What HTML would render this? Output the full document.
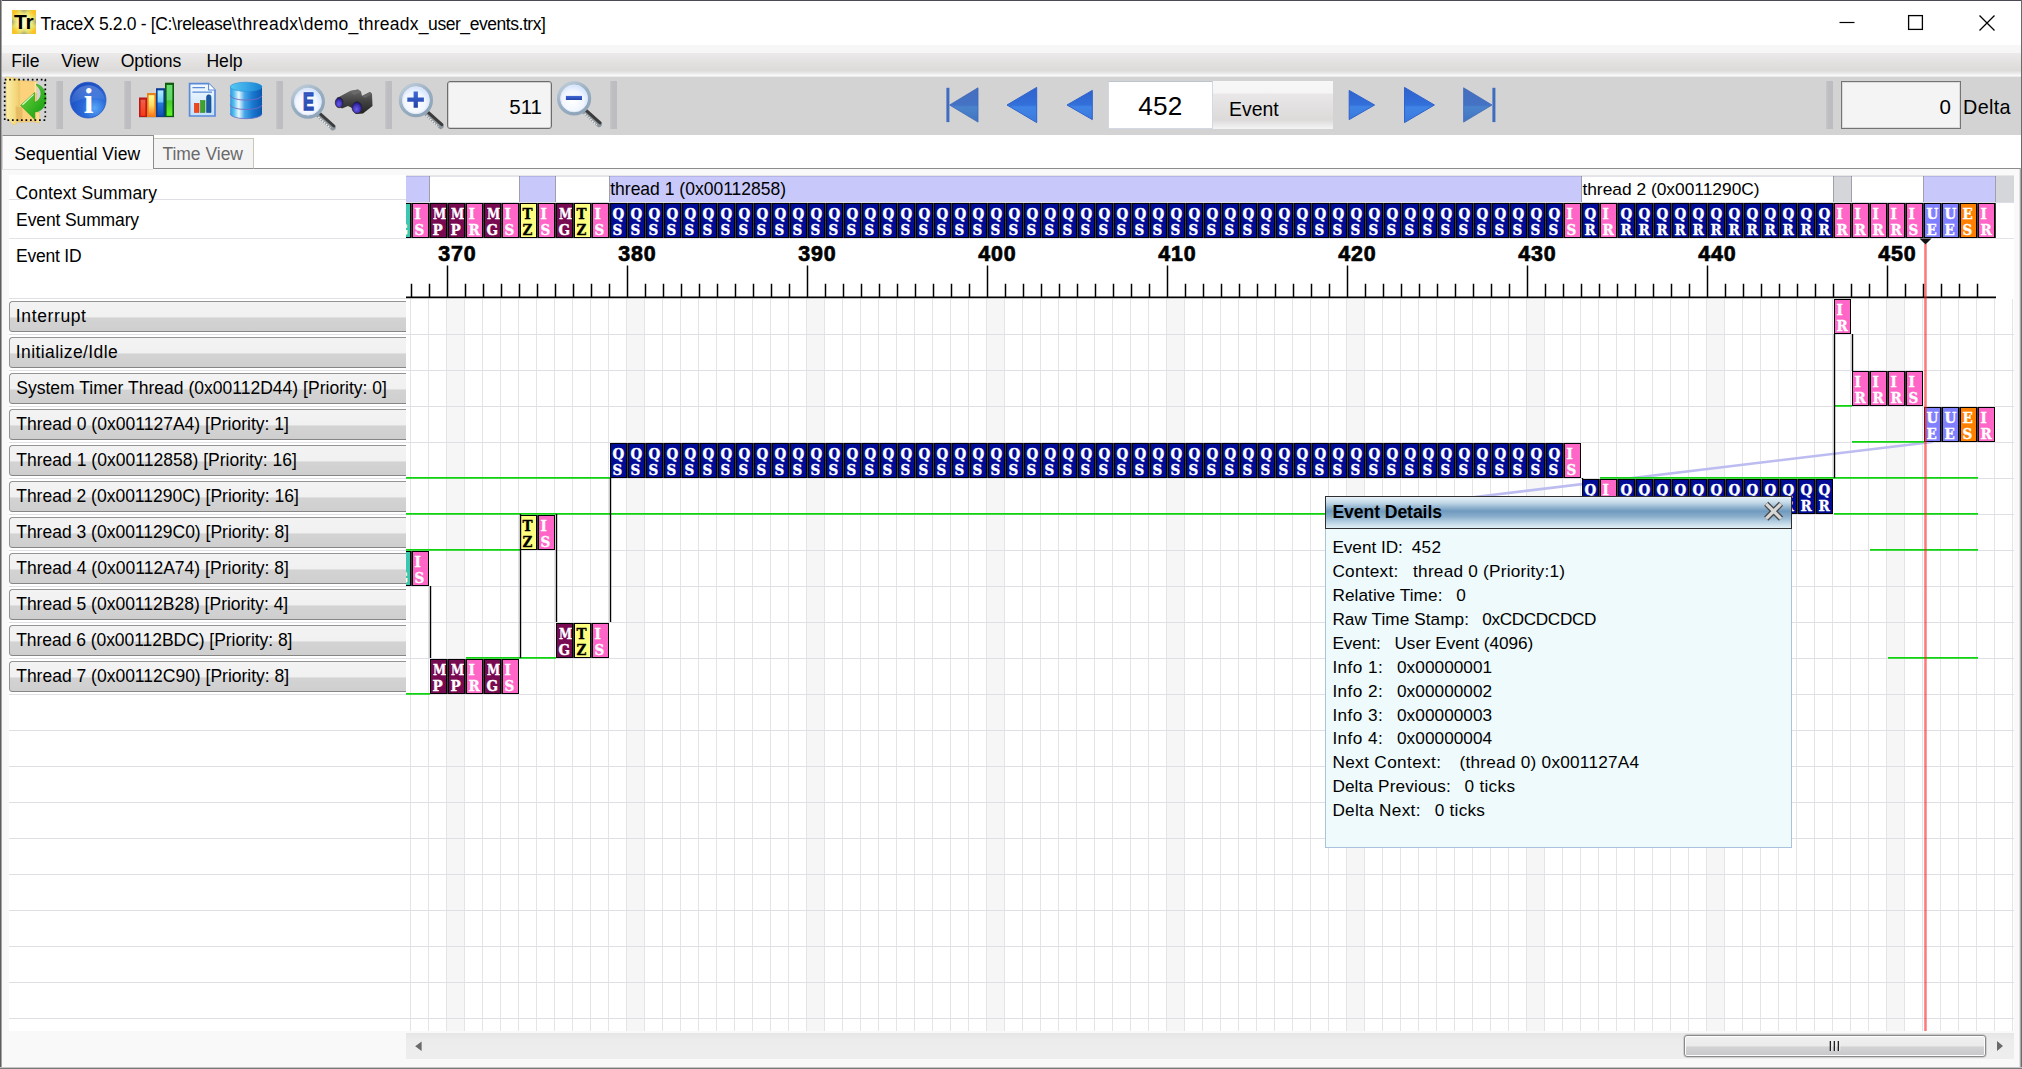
<!DOCTYPE html>
<html><head><meta charset="utf-8"><title>TraceX 5.2.0</title>
<style>
html,body{margin:0;padding:0}
body{width:2022px;height:1069px;position:relative;overflow:hidden;background:#f9f9f9;font-family:"Liberation Sans",sans-serif;color:#000}
.t{position:absolute;white-space:pre}
.b{position:absolute;box-sizing:border-box}
svg{position:absolute;overflow:visible}
.e{position:absolute;box-sizing:border-box;width:17px;height:35px;border:1px solid #000;color:#fff;font-family:"DejaVu Serif Condensed","DejaVu Serif",serif;font-weight:700;font-size:15px;line-height:16.1px;text-align:left;padding:1.6px 0 0 1.6px;overflow:hidden;white-space:pre;-webkit-text-stroke:.35px currentColor}
.e i{display:block;font-style:normal;transform-origin:0 0}
.e .w{transform:scaleX(.88)}
.p{background:#ff66c8}.m{background:#780a52}.q{background:#000c96}.y{background:#ffff80;color:#000}.g{background:#3cc8b0}.u{background:#8080ff}.o{background:#ff8000}
.rb{position:absolute;box-sizing:border-box;left:9px;width:397px;height:31px;border:1px solid #949494;border-bottom-color:#868686;border-right:none;border-radius:3.5px 0 0 3.5px;background:linear-gradient(#f3f3f3 0,#f1f1f1 50%,#d3d3d3 56%,#cfcfcf 100%)}
.sep{position:absolute;top:81px;width:7px;height:48px;background:linear-gradient(90deg,#c8c8cb 0,#bebec2 30%,#bdbdc1 100%)}
</style></head><body>
<div class="b" style="left:0px;top:0px;width:2022px;height:45px;background:#fff"></div>
<div class="b" style="left:12px;top:10px;width:24px;height:24px;background:radial-gradient(circle at 50% 50%,#ffffc4 0,#fdfbb0 30%,rgba(248,240,120,.75) 52%,rgba(240,230,110,0) 78%),conic-gradient(from 0deg at 50% 50%,#8a8a74 0deg,#d9cf5a 22deg,#ffc21e 45deg,#d9cf5a 68deg,#86866e 90deg,#d9cf5a 112deg,#ffc21e 135deg,#d9cf5a 158deg,#8a8a74 180deg,#d9cf5a 202deg,#ffc21e 225deg,#d9cf5a 248deg,#86866e 270deg,#d9cf5a 292deg,#ffc21e 315deg,#d9cf5a 338deg,#8a8a74 360deg)"></div>
<div class="t" style="left:13.90px;top:10px;font-size:21px;line-height:23px;font-weight:700;letter-spacing:-0.121px;">Tr</div>
<div class="t" style="left:40.60px;top:14px;font-size:17.5px;line-height:20px;"><span style="letter-spacing:-0.333px">TraceX 5.2.0 - </span><span style="letter-spacing:-0.320px">[C:\release</span><span style="letter-spacing:0.433px">\threadx</span><span style="letter-spacing:0.274px">\demo_threadx</span><span style="letter-spacing:-0.449px">_user_events.trx]</span></div>
<svg style="left:1830px;top:8px" width="180" height="30"><path d="M9.5 14.5H24.5" stroke="#000" stroke-width="1.2" fill="none"/><rect x="78.6" y="7.6" width="13.8" height="13.8" stroke="#000" stroke-width="1.3" fill="none"/><path d="M149.5 7.5L164.5 22.5M164.5 7.5L149.5 22.5" stroke="#000" stroke-width="1.3" fill="none"/></svg>
<div class="b" style="left:0px;top:45px;width:2022px;height:32px;background:linear-gradient(#f7f7f7 0,#f6f6f6 24%,#ebe9ea 26.5%,#e3e2e1 52%,#dcdbd9 80%,#e9e9e9 88%,#f9f9f9 95%,#e4e4e4 100%)"></div>
<div class="t" style="left:11.20px;top:51px;font-size:17.6px;line-height:20px;">File</div>
<div class="t" style="left:61.20px;top:51px;font-size:17.6px;line-height:20px;">View</div>
<div class="t" style="left:120.70px;top:51px;font-size:17.6px;line-height:20px;">Options</div>
<div class="t" style="left:206.40px;top:51px;font-size:17.6px;line-height:20px;">Help</div>
<div class="b" style="left:0px;top:77px;width:2022px;height:58px;background:#d3d3d3"></div>
<div class="sep" style="left:56px"></div>
<div class="sep" style="left:124px"></div>
<div class="sep" style="left:276px"></div>
<div class="sep" style="left:385px"></div>
<div class="sep" style="left:610px"></div>
<div class="sep" style="left:1826px"></div>
<svg style="left:0;top:0" width="2022" height="140"><defs>
<linearGradient id="gf1" x1="0" y1="0" x2="1" y2="0"><stop offset="0" stop-color="#fdf0a8"/><stop offset="1" stop-color="#f0d070"/></linearGradient>
<linearGradient id="gf2" x1="0" y1="0" x2="1" y2="0"><stop offset="0" stop-color="#f2c668"/><stop offset=".25" stop-color="#fdd27c"/><stop offset="1" stop-color="#fbd07a"/></linearGradient>
<linearGradient id="gar" x1="0" y1="0" x2="1" y2="1"><stop offset="0" stop-color="#7ad848"/><stop offset=".5" stop-color="#40b828"/><stop offset="1" stop-color="#089808"/></linearGradient>
<radialGradient id="gin" cx=".68" cy=".72" r=".75"><stop offset="0" stop-color="#58a8f8"/><stop offset=".45" stop-color="#2a68d8"/><stop offset="1" stop-color="#1a4cc0"/></radialGradient>
<linearGradient id="ginh" x1="0" y1="0" x2="0" y2="1"><stop offset="0" stop-color="#fff" stop-opacity=".22"/><stop offset="1" stop-color="#fff" stop-opacity=".05"/></linearGradient>
<linearGradient id="br" x1="0" y1="0" x2="0" y2="1"><stop offset="0" stop-color="#f06048"/><stop offset="1" stop-color="#f83818"/></linearGradient>
<linearGradient id="bo" x1="0" y1="0" x2="0" y2="1"><stop offset="0" stop-color="#ffff98"/><stop offset=".5" stop-color="#ffd860"/><stop offset="1" stop-color="#ff7820"/></linearGradient>
<linearGradient id="bb" x1="0" y1="0" x2="0" y2="1"><stop offset="0" stop-color="#b0f0ff"/><stop offset=".45" stop-color="#70c8f8"/><stop offset=".5" stop-color="#2878d8"/><stop offset="1" stop-color="#1050b0"/></linearGradient>
<linearGradient id="bg" x1="0" y1="0" x2="0" y2="1"><stop offset="0" stop-color="#68dc70"/><stop offset=".48" stop-color="#60d868"/><stop offset=".52" stop-color="#48c830"/><stop offset="1" stop-color="#60f828"/></linearGradient>
<linearGradient id="gdoc" x1="0" y1="0" x2="0" y2="1"><stop offset="0" stop-color="#f4faff"/><stop offset="1" stop-color="#c4e0fc"/></linearGradient>
<linearGradient id="gdb" x1="0" y1="0" x2="1" y2="0"><stop offset="0" stop-color="#2a98e0"/><stop offset=".12" stop-color="#58c0f0"/><stop offset=".27" stop-color="#e8faff"/><stop offset=".45" stop-color="#48a8e8"/><stop offset=".7" stop-color="#1a78d0"/><stop offset="1" stop-color="#0a58b0"/></linearGradient>
<linearGradient id="gdbt" x1="0" y1="0" x2="1" y2="0"><stop offset="0" stop-color="#58c8f0"/><stop offset=".5" stop-color="#38a8e8"/><stop offset="1" stop-color="#1880d0"/></linearGradient>
<radialGradient id="glens" cx=".45" cy=".6" r=".6"><stop offset="0" stop-color="#ffffff"/><stop offset=".6" stop-color="#f0f5ff"/><stop offset="1" stop-color="#c8dcff"/></radialGradient>
<linearGradient id="gring" x1="0" y1="0" x2=".6" y2="1"><stop offset="0" stop-color="#c2d0dc"/><stop offset=".55" stop-color="#98aec2"/><stop offset="1" stop-color="#8fa6ba"/></linearGradient>
<linearGradient id="gblue" x1="0" y1="0" x2="0" y2="1"><stop offset="0" stop-color="#4068d8"/><stop offset="1" stop-color="#2444a8"/></linearGradient>
<radialGradient id="gbin" cx=".45" cy=".65" r=".6"><stop offset="0" stop-color="#6a5ce8"/><stop offset=".6" stop-color="#4034b8"/><stop offset="1" stop-color="#1c1470"/></radialGradient>
<linearGradient id="gbody" x1="0" y1="0" x2="0" y2="1"><stop offset="0" stop-color="#6c6c6c"/><stop offset=".45" stop-color="#444"/><stop offset="1" stop-color="#222"/></linearGradient>
<linearGradient id="gnav" x1="0" y1="0" x2="0" y2="1"><stop offset="0" stop-color="#2e62cc"/><stop offset=".5" stop-color="#3370da"/><stop offset=".56" stop-color="#3f84e6"/><stop offset="1" stop-color="#3a78dc"/></linearGradient>
<linearGradient id="gnav2" x1="0" y1="0" x2="0" y2="1"><stop offset="0" stop-color="#466fbe"/><stop offset=".5" stop-color="#4472c4"/><stop offset=".56" stop-color="#4a84cc"/><stop offset="1" stop-color="#4272c0"/></linearGradient>
</defs><path d="M18.8 80.5L36.5 81.5V112L39.5 112.6V123L34 121.6L19 122.2L16.2 121L15.7 106.5L18.8 105.5Z" fill="url(#gf2)" stroke="#e6bc60" stroke-width=".6"/><path d="M34.6 82V93H36.5V82Z" fill="#fbe7a0"/><path d="M36.2 112.4L39.4 113V122.8L36.2 122Z" fill="#f8de90"/><path d="M15.9 107H22.5V121.6L16.4 121Z" fill="#e3b962" opacity=".85"/><path d="M6 76.8L17 78.6Q18.8 79.2 18.8 82V105.5L15.7 106.5L16.5 124L13 124.5L6.3 117.5Z" fill="url(#gf1)" stroke="#e8c868" stroke-width=".6"/><path d="M36.5 84.3C42.5 85.5 46 91.5 46 98.6C46 106 42 111 36.5 111.7L34.8 111.9V119.6L20.7 105.4L34.6 92.6V102.3C38 101.5 40.8 98 41 94C41.1 90.5 39 87 36.5 85.3Z" fill="url(#gar)" stroke="#1a9c12" stroke-width=".6"/><path d="M33.6 94.4L22.4 104.8" stroke="#dcffd4" stroke-width="1.1" fill="none"/><rect x="4.7" y="79.6" width="40.6" height="40.5" fill="none" stroke="#000" stroke-width="1.7" stroke-dasharray="1.7 2.81"/><circle cx="88.1" cy="100.1" r="17.9" fill="url(#gin)" stroke="#2a5cc8" stroke-width=".8"/><path d="M71.2 103.5A17 17 0 0 1 105 100C95 96 82 97 71.2 103.5Z" fill="url(#ginh)"/><text x="88.7" y="112.5" font-family="'Liberation Serif','DejaVu Serif',serif" font-weight="700" font-size="35" text-anchor="middle" fill="#fff">i</text><rect x="139" y="97.5" width="8" height="19.5" fill="#b81818"/><rect x="140.6" y="99.7" width="4.8" height="16.1" fill="url(#br)"/><rect x="147" y="93" width="9" height="24" fill="#e88018"/><rect x="148.6" y="95.2" width="5.8" height="20.6" fill="url(#bo)"/><rect x="156" y="88.2" width="9" height="28.799999999999997" fill="#0a3c98"/><rect x="157.6" y="90.4" width="5.8" height="25.4" fill="url(#bb)"/><rect x="165" y="82.7" width="9" height="34.3" fill="#0a5a0a"/><rect x="166.6" y="84.9" width="5.8" height="30.9" fill="url(#bg)"/><rect x="139" y="117" width="35.5" height="1" fill="#b8b8b8"/><path d="M189.6 83.6H208.6L215 90V116H189.6Z" fill="url(#gdoc)" stroke="#5a8ad8" stroke-width="1.7"/><path d="M208.6 83.6V90H215" fill="#fff" stroke="#5a8ad8" stroke-width="1.1"/><path d="M192.4 87.6H205M192.4 92.2H212" stroke="#5a8ad8" stroke-width="1.3" fill="none"/><rect x="194.4" y="103.4" width="4.6" height="9" fill="#f04818" stroke="#d83010" stroke-width=".6"/><rect x="200.6" y="100.6" width="4.4" height="11.8" fill="#40a030" stroke="#2a8820" stroke-width=".6"/><path d="M206.6 112.4V97A2.2 2.2 0 0 1 211 97V112.4Z" fill="#1a5aa0" stroke="#0a4088" stroke-width=".6"/><path d="M230.2 86.6V113.8A15.9 4.9 0 0 0 262 113.8V86.6Z" fill="url(#gdb)"/><ellipse cx="246.1" cy="86.8" rx="15.9" ry="4.6" fill="url(#gdbt)" stroke="#2a90d8" stroke-width=".6"/><path d="M230.2 95.4A15.9 4.7 0 0 0 262 95.4M230.2 104.8A15.9 4.7 0 0 0 262 104.8" stroke="#7a68c0" stroke-width=".9" fill="none"/><path d="M230.2 113.8A15.9 4.9 0 0 0 262 113.8" stroke="#6a70c8" stroke-width=".8" fill="none"/><g transform="translate(307.9 101.6)"><path d="M10 12.5L25 26" stroke="#8e979e" stroke-width="5.6" stroke-linecap="round" fill="none"/><path d="M11.5 11.5L26 24.4" stroke="#3c3c3c" stroke-width="3" stroke-linecap="round" fill="none"/><path d="M10.5 15.5L22.5 26.5" stroke="#f2f2f2" stroke-width="1.6" stroke-dasharray="1.4 1.2" fill="none"/><circle cx="0" cy="0" r="17" fill="#c8c8c8" opacity=".55"/><circle cx="0" cy="0" r="15.4" fill="url(#glens)" stroke="url(#gring)" stroke-width="3.4"/><circle cx="0" cy="0" r="13.4" fill="none" stroke="#dfe8f4" stroke-width=".9"/></g><text x="302.9" y="109.9" font-family="'Liberation Sans',sans-serif" font-weight="700" font-size="24.6" textLength="10.9" lengthAdjust="spacingAndGlyphs" fill="url(#gblue)" stroke="#2c4cb4" stroke-width="1.5" stroke-linejoin="miter">E</text><path d="M337 98L350 91L358 89.5L361 91.5L362 96L370 92L372 94L372.5 106L363 113.5L356 114L352 108L348 106L342 108.5L337 105Z" fill="url(#gbody)"/><path d="M350 91L358 89.5L361 92L354 95Z" fill="#6a6a6a"/><path d="M362 96L370 92L372 94L365 98Z" fill="#666"/><ellipse cx="339.2" cy="102.6" rx="3.9" ry="5.1" fill="url(#gbin)" stroke="#2a2a2a" stroke-width=".8"/><ellipse cx="357" cy="107.6" rx="4.9" ry="5.9" fill="url(#gbin)" stroke="#2a2a2a" stroke-width=".8"/><g transform="translate(415.9 100.2)"><path d="M10 12.5L25 26" stroke="#8e979e" stroke-width="5.6" stroke-linecap="round" fill="none"/><path d="M11.5 11.5L26 24.4" stroke="#3c3c3c" stroke-width="3" stroke-linecap="round" fill="none"/><path d="M10.5 15.5L22.5 26.5" stroke="#f2f2f2" stroke-width="1.6" stroke-dasharray="1.4 1.2" fill="none"/><circle cx="0" cy="0" r="17" fill="#c8c8c8" opacity=".55"/><circle cx="0" cy="0" r="15.4" fill="url(#glens)" stroke="url(#gring)" stroke-width="3.4"/><circle cx="0" cy="0" r="13.4" fill="none" stroke="#dfe8f4" stroke-width=".9"/></g><path d="M407.3 97.5H413.6V91.5H417.9V97.5H423.9V101.7H417.9V107.8H413.6V101.7H407.3Z" fill="url(#gblue)"/><g transform="translate(574.1 98.4)"><path d="M10 12.5L25 26" stroke="#8e979e" stroke-width="5.6" stroke-linecap="round" fill="none"/><path d="M11.5 11.5L26 24.4" stroke="#3c3c3c" stroke-width="3" stroke-linecap="round" fill="none"/><path d="M10.5 15.5L22.5 26.5" stroke="#f2f2f2" stroke-width="1.6" stroke-dasharray="1.4 1.2" fill="none"/><circle cx="0" cy="0" r="17" fill="#c8c8c8" opacity=".55"/><circle cx="0" cy="0" r="15.4" fill="url(#glens)" stroke="url(#gring)" stroke-width="3.4"/><circle cx="0" cy="0" r="13.4" fill="none" stroke="#dfe8f4" stroke-width=".9"/></g><rect x="565.9" y="95.9" width="16.1" height="4.1" fill="url(#gblue)"/><rect x="946.4" y="87.8" width="3" height="34.3" fill="#3f6cc0"/><path d="M949.6 105L978 87.8V122.1Z" fill="url(#gnav2)" stroke="#3e68b8" stroke-width=".8" stroke-linejoin="round"/><path d="M1007 105L1036.7 87.4V122.6Z" fill="url(#gnav)" stroke="#2e62cc" stroke-width="1" stroke-linejoin="round"/><path d="M1067 105L1092.3 90.4V119.6Z" fill="url(#gnav)" stroke="#2e62cc" stroke-width="1" stroke-linejoin="round"/><path d="M1374.6 105L1349.2 90.4V119.6Z" fill="url(#gnav)" stroke="#2e62cc" stroke-width="1" stroke-linejoin="round"/><path d="M1434.4 105L1404.5 87.4V122.6Z" fill="url(#gnav)" stroke="#2e62cc" stroke-width="1" stroke-linejoin="round"/><path d="M1492 105L1463.6 87.8V122.1Z" fill="url(#gnav2)" stroke="#3e68b8" stroke-width=".8" stroke-linejoin="round"/><rect x="1492.4" y="87.8" width="3" height="34.3" fill="#3f6cc0"/></svg>
<div class="b" style="left:447px;top:81px;width:105px;height:48px;background:#f4f4f4;border:1px solid #6c6c6c;border-radius:3px;box-shadow:inset 0 0 0 1px rgba(120,120,120,.28)"></div>
<div class="t" style="left:509.32px;top:95px;font-size:20.5px;line-height:23px;">511</div>
<div class="b" style="left:1108px;top:81px;width:105px;height:48px;background:#fff;border:1px solid #d2d9e4;border-top-color:#bcc4d0"></div>
<div class="t" style="left:1138.30px;top:91px;font-size:26.2px;line-height:30px;letter-spacing:0.162px;">452</div>
<div class="b" style="left:1213px;top:81px;width:120px;height:48px;background:linear-gradient(#f7f7f7 0,#f5f5f5 25%,#e9e7e7 27.5%,#e2e0e0 55%,#dddbda 81%,#e8e7e7 90%,#f5f5f5 100%)"></div>
<div class="t" style="left:1229.00px;top:98px;font-size:19.44px;line-height:22px;">Event</div>
<div class="b" style="left:1841px;top:81px;width:120px;height:48px;background:#f4f4f4;border:1px solid #747474;box-shadow:inset 0 0 0 1px rgba(120,120,120,.2)"></div>
<div class="t" style="left:1939.60px;top:95px;font-size:20.5px;line-height:23px;">0</div>
<div class="t" style="left:1963.00px;top:96px;font-size:19.8px;line-height:22px;letter-spacing:0.355px;">Delta</div>
<div class="b" style="left:0px;top:135px;width:2022px;height:34px;background:#fff"></div>
<div class="b" style="left:153px;top:168px;width:1869px;height:1px;background:#8c8c8c"></div>
<div class="b" style="left:153px;top:138px;width:101px;height:31px;background:#f4f4f4;border:1px solid #c9c7ba;border-bottom:1px solid #8c8c8c"></div>
<div class="t" style="left:162.40px;top:144px;font-size:17.5px;line-height:20px;color:#6a6a6a;letter-spacing:-0.013px;">Time View</div>
<div class="b" style="left:2px;top:135px;width:152px;height:34px;background:#fafafa;border-top:1px solid #8e8e8e;border-right:1px solid #8e8e8e;border-left:1px solid #d4d4d4"></div>
<div class="b" style="left:2px;top:169px;width:151px;height:1px;background:#e2e2e2"></div>
<div class="t" style="left:14.20px;top:144px;font-size:17.5px;line-height:20px;letter-spacing:0.054px;">Sequential View</div>
<div class="b" style="left:9px;top:175px;width:397px;height:856px;background:#fff"></div>
<div class="b" style="left:406px;top:175px;width:1608px;height:856px;background:#fff"></div>
<div class="b" style="left:447px;top:299px;width:18px;height:732px;background:#f6f6f6"></div>
<div class="b" style="left:627px;top:299px;width:18px;height:732px;background:#f6f6f6"></div>
<div class="b" style="left:807px;top:299px;width:18px;height:732px;background:#f6f6f6"></div>
<div class="b" style="left:987px;top:299px;width:18px;height:732px;background:#f6f6f6"></div>
<div class="b" style="left:1167px;top:299px;width:18px;height:732px;background:#f6f6f6"></div>
<div class="b" style="left:1347px;top:299px;width:18px;height:732px;background:#f6f6f6"></div>
<div class="b" style="left:1527px;top:299px;width:18px;height:732px;background:#f6f6f6"></div>
<div class="b" style="left:1707px;top:299px;width:18px;height:732px;background:#f6f6f6"></div>
<div class="b" style="left:1887px;top:299px;width:18px;height:732px;background:#f6f6f6"></div>
<div class="b" style="left:410px;top:299px;width:1604px;height:732px;background:repeating-linear-gradient(90deg,#e3e3e8 0,#e3e3e8 1px,transparent 1px,transparent 18px)"></div>
<div class="b" style="left:9px;top:334px;width:2005px;height:1px;background:#dfdfe5"></div>
<div class="b" style="left:9px;top:370px;width:2005px;height:1px;background:#dfdfe5"></div>
<div class="b" style="left:9px;top:406px;width:2005px;height:1px;background:#dfdfe5"></div>
<div class="b" style="left:9px;top:442px;width:2005px;height:1px;background:#dfdfe5"></div>
<div class="b" style="left:9px;top:478px;width:2005px;height:1px;background:#dfdfe5"></div>
<div class="b" style="left:9px;top:514px;width:2005px;height:1px;background:#dfdfe5"></div>
<div class="b" style="left:9px;top:550px;width:2005px;height:1px;background:#dfdfe5"></div>
<div class="b" style="left:9px;top:586px;width:2005px;height:1px;background:#dfdfe5"></div>
<div class="b" style="left:9px;top:622px;width:2005px;height:1px;background:#dfdfe5"></div>
<div class="b" style="left:9px;top:658px;width:2005px;height:1px;background:#dfdfe5"></div>
<div class="b" style="left:9px;top:694px;width:2005px;height:1px;background:#dfdfe5"></div>
<div class="b" style="left:9px;top:730px;width:2005px;height:1px;background:#dfdfe5"></div>
<div class="b" style="left:9px;top:766px;width:2005px;height:1px;background:#dfdfe5"></div>
<div class="b" style="left:9px;top:802px;width:2005px;height:1px;background:#dfdfe5"></div>
<div class="b" style="left:9px;top:838px;width:2005px;height:1px;background:#dfdfe5"></div>
<div class="b" style="left:9px;top:874px;width:2005px;height:1px;background:#dfdfe5"></div>
<div class="b" style="left:9px;top:910px;width:2005px;height:1px;background:#dfdfe5"></div>
<div class="b" style="left:9px;top:946px;width:2005px;height:1px;background:#dfdfe5"></div>
<div class="b" style="left:9px;top:982px;width:2005px;height:1px;background:#dfdfe5"></div>
<div class="b" style="left:9px;top:1018px;width:2005px;height:1px;background:#dfdfe5"></div>
<div class="b" style="left:9px;top:199px;width:397px;height:1px;background:#dfdfe5"></div>
<div class="b" style="left:9px;top:238px;width:2005px;height:1px;background:#e4e4e8"></div>
<div class="b" style="left:9px;top:298px;width:397px;height:1px;background:#dfdfe5"></div>
<div class="t" style="left:15.60px;top:183px;font-size:17.5px;line-height:20px;letter-spacing:0.090px;">Context Summary</div>
<div class="t" style="left:16.10px;top:210px;font-size:17.5px;line-height:20px;letter-spacing:-0.122px;">Event Summary</div>
<div class="t" style="left:16.10px;top:246px;font-size:17.5px;line-height:20px;letter-spacing:-0.227px;">Event ID</div>
<div class="rb" style="top:301px"></div>
<div class="t" style="left:15.80px;top:306px;font-size:17.5px;line-height:20px;letter-spacing:0.625px;">Interrupt</div>
<div class="rb" style="top:337px"></div>
<div class="t" style="left:15.80px;top:342px;font-size:17.5px;line-height:20px;letter-spacing:0.406px;">Initialize/Idle</div>
<div class="rb" style="top:373px"></div>
<div class="t" style="left:16.20px;top:378px;font-size:17.5px;line-height:20px;letter-spacing:0.019px;">System Timer Thread (0x00112D44) [Priority: 0]</div>
<div class="rb" style="top:409px"></div>
<div class="t" style="left:16.20px;top:414px;font-size:17.5px;line-height:20px;letter-spacing:0.022px;">Thread 0 (0x001127A4) [Priority: 1]</div>
<div class="rb" style="top:445px"></div>
<div class="t" style="left:16.20px;top:450px;font-size:17.5px;line-height:20px;letter-spacing:0.024px;">Thread 1 (0x00112858) [Priority: 16]</div>
<div class="rb" style="top:481px"></div>
<div class="t" style="left:16.20px;top:486px;font-size:17.5px;line-height:20px;">Thread 2 (0x0011290C) [Priority: 16]</div>
<div class="rb" style="top:517px"></div>
<div class="t" style="left:16.20px;top:522px;font-size:17.5px;line-height:20px;">Thread 3 (0x001129C0) [Priority: 8]</div>
<div class="rb" style="top:553px"></div>
<div class="t" style="left:16.20px;top:558px;font-size:17.5px;line-height:20px;letter-spacing:0.022px;">Thread 4 (0x00112A74) [Priority: 8]</div>
<div class="rb" style="top:589px"></div>
<div class="t" style="left:16.20px;top:594px;font-size:17.5px;line-height:20px;">Thread 5 (0x00112B28) [Priority: 4]</div>
<div class="rb" style="top:625px"></div>
<div class="t" style="left:16.20px;top:630px;font-size:17.5px;line-height:20px;letter-spacing:-0.047px;">Thread 6 (0x00112BDC) [Priority: 8]</div>
<div class="rb" style="top:661px"></div>
<div class="t" style="left:16.20px;top:666px;font-size:17.5px;line-height:20px;">Thread 7 (0x00112C90) [Priority: 8]</div>
<div class="b" style="left:406px;top:175px;width:1608px;height:1px;background:#e6e6e6"></div>
<div class="b" style="left:406px;top:176px;width:24px;height:26px;background:#c8c8fa;border-right:1px solid #a0a0ac;"></div>
<div class="b" style="left:430px;top:176px;width:90px;height:26px;background:#fff;border-right:1px solid #a0a0ac;"></div>
<div class="b" style="left:520px;top:176px;width:36px;height:26px;background:#c8c8fa;border-right:1px solid #a0a0ac;"></div>
<div class="b" style="left:556px;top:176px;width:54px;height:26px;background:#fff;border-right:1px solid #a0a0ac;"></div>
<div class="b" style="left:610px;top:176px;width:972px;height:26px;background:#c8c8fa;border-right:1px solid #a0a0ac;"></div>
<div class="b" style="left:1582px;top:176px;width:252px;height:26px;background:#fff;border-right:1px solid #a0a0ac;"></div>
<div class="b" style="left:1834px;top:176px;width:18px;height:26px;background:#d5d6da;border-right:1px solid #a0a0ac;"></div>
<div class="b" style="left:1852px;top:176px;width:72px;height:26px;background:#fff;border-right:1px solid #a0a0ac;"></div>
<div class="b" style="left:1924px;top:176px;width:72px;height:26px;background:#c8c8fa;border-right:1px solid #a0a0ac;"></div>
<div class="b" style="left:1996px;top:176px;width:18px;height:26px;background:#d5d6da;"></div>
<div class="b" style="left:406px;top:202px;width:1608px;height:1px;background:#dcdce8"></div>
<div class="b" style="left:406px;top:176px;width:1590px;height:1px;background:rgba(80,80,130,.16)"></div>
<div class="t" style="left:610.20px;top:179px;font-size:17.53px;line-height:20px;">thread 1 (0x00112858)</div>
<div class="t" style="left:1582.40px;top:179px;font-size:17.37px;line-height:20px;">thread 2 (0x0011290C)</div>
<svg style="left:0;top:0" width="2022" height="1069"><path d="M1475 497L1932 442" stroke="#bcbcf0" stroke-width="2.6" fill="none" stroke-linecap="round"/></svg>
<div class="b" style="left:406px;top:203px;width:1590px;height:35px;background:#3c3c3c"></div>
<div class="e g" style="left:394px;top:203px;clip-path:inset(0 0 0 12px)"><i> </i><i>G</i></div>
<div class="e p" style="left:412px;top:203px"><i>I</i><i>S</i></div>
<div class="e m" style="left:430px;top:203px"><i class="w">M</i><i>P</i></div>
<div class="e m" style="left:448px;top:203px"><i class="w">M</i><i>P</i></div>
<div class="e p" style="left:466px;top:203px"><i>I</i><i>R</i></div>
<div class="e m" style="left:484px;top:203px"><i class="w">M</i><i>G</i></div>
<div class="e p" style="left:502px;top:203px"><i>I</i><i>S</i></div>
<div class="e y" style="left:520px;top:203px"><i>T</i><i>Z</i></div>
<div class="e p" style="left:538px;top:203px"><i>I</i><i>S</i></div>
<div class="e m" style="left:556px;top:203px"><i class="w">M</i><i>G</i></div>
<div class="e y" style="left:574px;top:203px"><i>T</i><i>Z</i></div>
<div class="e p" style="left:592px;top:203px"><i>I</i><i>S</i></div>
<div class="e q" style="left:610px;top:203px"><i>Q</i><i>S</i></div>
<div class="e q" style="left:628px;top:203px"><i>Q</i><i>S</i></div>
<div class="e q" style="left:646px;top:203px"><i>Q</i><i>S</i></div>
<div class="e q" style="left:664px;top:203px"><i>Q</i><i>S</i></div>
<div class="e q" style="left:682px;top:203px"><i>Q</i><i>S</i></div>
<div class="e q" style="left:700px;top:203px"><i>Q</i><i>S</i></div>
<div class="e q" style="left:718px;top:203px"><i>Q</i><i>S</i></div>
<div class="e q" style="left:736px;top:203px"><i>Q</i><i>S</i></div>
<div class="e q" style="left:754px;top:203px"><i>Q</i><i>S</i></div>
<div class="e q" style="left:772px;top:203px"><i>Q</i><i>S</i></div>
<div class="e q" style="left:790px;top:203px"><i>Q</i><i>S</i></div>
<div class="e q" style="left:808px;top:203px"><i>Q</i><i>S</i></div>
<div class="e q" style="left:826px;top:203px"><i>Q</i><i>S</i></div>
<div class="e q" style="left:844px;top:203px"><i>Q</i><i>S</i></div>
<div class="e q" style="left:862px;top:203px"><i>Q</i><i>S</i></div>
<div class="e q" style="left:880px;top:203px"><i>Q</i><i>S</i></div>
<div class="e q" style="left:898px;top:203px"><i>Q</i><i>S</i></div>
<div class="e q" style="left:916px;top:203px"><i>Q</i><i>S</i></div>
<div class="e q" style="left:934px;top:203px"><i>Q</i><i>S</i></div>
<div class="e q" style="left:952px;top:203px"><i>Q</i><i>S</i></div>
<div class="e q" style="left:970px;top:203px"><i>Q</i><i>S</i></div>
<div class="e q" style="left:988px;top:203px"><i>Q</i><i>S</i></div>
<div class="e q" style="left:1006px;top:203px"><i>Q</i><i>S</i></div>
<div class="e q" style="left:1024px;top:203px"><i>Q</i><i>S</i></div>
<div class="e q" style="left:1042px;top:203px"><i>Q</i><i>S</i></div>
<div class="e q" style="left:1060px;top:203px"><i>Q</i><i>S</i></div>
<div class="e q" style="left:1078px;top:203px"><i>Q</i><i>S</i></div>
<div class="e q" style="left:1096px;top:203px"><i>Q</i><i>S</i></div>
<div class="e q" style="left:1114px;top:203px"><i>Q</i><i>S</i></div>
<div class="e q" style="left:1132px;top:203px"><i>Q</i><i>S</i></div>
<div class="e q" style="left:1150px;top:203px"><i>Q</i><i>S</i></div>
<div class="e q" style="left:1168px;top:203px"><i>Q</i><i>S</i></div>
<div class="e q" style="left:1186px;top:203px"><i>Q</i><i>S</i></div>
<div class="e q" style="left:1204px;top:203px"><i>Q</i><i>S</i></div>
<div class="e q" style="left:1222px;top:203px"><i>Q</i><i>S</i></div>
<div class="e q" style="left:1240px;top:203px"><i>Q</i><i>S</i></div>
<div class="e q" style="left:1258px;top:203px"><i>Q</i><i>S</i></div>
<div class="e q" style="left:1276px;top:203px"><i>Q</i><i>S</i></div>
<div class="e q" style="left:1294px;top:203px"><i>Q</i><i>S</i></div>
<div class="e q" style="left:1312px;top:203px"><i>Q</i><i>S</i></div>
<div class="e q" style="left:1330px;top:203px"><i>Q</i><i>S</i></div>
<div class="e q" style="left:1348px;top:203px"><i>Q</i><i>S</i></div>
<div class="e q" style="left:1366px;top:203px"><i>Q</i><i>S</i></div>
<div class="e q" style="left:1384px;top:203px"><i>Q</i><i>S</i></div>
<div class="e q" style="left:1402px;top:203px"><i>Q</i><i>S</i></div>
<div class="e q" style="left:1420px;top:203px"><i>Q</i><i>S</i></div>
<div class="e q" style="left:1438px;top:203px"><i>Q</i><i>S</i></div>
<div class="e q" style="left:1456px;top:203px"><i>Q</i><i>S</i></div>
<div class="e q" style="left:1474px;top:203px"><i>Q</i><i>S</i></div>
<div class="e q" style="left:1492px;top:203px"><i>Q</i><i>S</i></div>
<div class="e q" style="left:1510px;top:203px"><i>Q</i><i>S</i></div>
<div class="e q" style="left:1528px;top:203px"><i>Q</i><i>S</i></div>
<div class="e q" style="left:1546px;top:203px"><i>Q</i><i>S</i></div>
<div class="e p" style="left:1564px;top:203px"><i>I</i><i>S</i></div>
<div class="e q" style="left:1582px;top:203px"><i>Q</i><i>R</i></div>
<div class="e p" style="left:1600px;top:203px"><i>I</i><i>R</i></div>
<div class="e q" style="left:1618px;top:203px"><i>Q</i><i>R</i></div>
<div class="e q" style="left:1636px;top:203px"><i>Q</i><i>R</i></div>
<div class="e q" style="left:1654px;top:203px"><i>Q</i><i>R</i></div>
<div class="e q" style="left:1672px;top:203px"><i>Q</i><i>R</i></div>
<div class="e q" style="left:1690px;top:203px"><i>Q</i><i>R</i></div>
<div class="e q" style="left:1708px;top:203px"><i>Q</i><i>R</i></div>
<div class="e q" style="left:1726px;top:203px"><i>Q</i><i>R</i></div>
<div class="e q" style="left:1744px;top:203px"><i>Q</i><i>R</i></div>
<div class="e q" style="left:1762px;top:203px"><i>Q</i><i>R</i></div>
<div class="e q" style="left:1780px;top:203px"><i>Q</i><i>R</i></div>
<div class="e q" style="left:1798px;top:203px"><i>Q</i><i>R</i></div>
<div class="e q" style="left:1816px;top:203px"><i>Q</i><i>R</i></div>
<div class="e p" style="left:1834px;top:203px"><i>I</i><i>R</i></div>
<div class="e p" style="left:1852px;top:203px"><i>I</i><i>R</i></div>
<div class="e p" style="left:1870px;top:203px"><i>I</i><i>R</i></div>
<div class="e p" style="left:1888px;top:203px"><i>I</i><i>R</i></div>
<div class="e p" style="left:1906px;top:203px"><i>I</i><i>S</i></div>
<div class="e u" style="left:1924px;top:203px"><i>U</i><i>E</i></div>
<div class="e u" style="left:1942px;top:203px"><i>U</i><i>E</i></div>
<div class="e o" style="left:1960px;top:203px"><i>E</i><i>S</i></div>
<div class="e p" style="left:1978px;top:203px"><i>I</i><i>R</i></div>
<div class="b" style="left:406px;top:551px;width:23px;height:35px;background:#3c3c3c"></div>
<div class="b" style="left:430px;top:659px;width:89px;height:35px;background:#3c3c3c"></div>
<div class="b" style="left:520px;top:515px;width:35px;height:35px;background:#3c3c3c"></div>
<div class="b" style="left:556px;top:623px;width:53px;height:35px;background:#3c3c3c"></div>
<div class="b" style="left:610px;top:443px;width:971px;height:35px;background:#3c3c3c"></div>
<div class="b" style="left:1582px;top:479px;width:251px;height:35px;background:#3c3c3c"></div>
<div class="b" style="left:1834px;top:299px;width:17px;height:35px;background:#3c3c3c"></div>
<div class="b" style="left:1852px;top:371px;width:71px;height:35px;background:#3c3c3c"></div>
<div class="b" style="left:1924px;top:407px;width:71px;height:35px;background:#3c3c3c"></div>
<div class="e g" style="left:394px;top:551px;clip-path:inset(0 0 0 12px)"><i> </i><i>G</i></div>
<div class="e p" style="left:412px;top:551px"><i>I</i><i>S</i></div>
<div class="e m" style="left:430px;top:659px"><i class="w">M</i><i>P</i></div>
<div class="e m" style="left:448px;top:659px"><i class="w">M</i><i>P</i></div>
<div class="e p" style="left:466px;top:659px"><i>I</i><i>R</i></div>
<div class="e m" style="left:484px;top:659px"><i class="w">M</i><i>G</i></div>
<div class="e p" style="left:502px;top:659px"><i>I</i><i>S</i></div>
<div class="e y" style="left:520px;top:515px"><i>T</i><i>Z</i></div>
<div class="e p" style="left:538px;top:515px"><i>I</i><i>S</i></div>
<div class="e m" style="left:556px;top:623px"><i class="w">M</i><i>G</i></div>
<div class="e y" style="left:574px;top:623px"><i>T</i><i>Z</i></div>
<div class="e p" style="left:592px;top:623px"><i>I</i><i>S</i></div>
<div class="e q" style="left:610px;top:443px"><i>Q</i><i>S</i></div>
<div class="e q" style="left:628px;top:443px"><i>Q</i><i>S</i></div>
<div class="e q" style="left:646px;top:443px"><i>Q</i><i>S</i></div>
<div class="e q" style="left:664px;top:443px"><i>Q</i><i>S</i></div>
<div class="e q" style="left:682px;top:443px"><i>Q</i><i>S</i></div>
<div class="e q" style="left:700px;top:443px"><i>Q</i><i>S</i></div>
<div class="e q" style="left:718px;top:443px"><i>Q</i><i>S</i></div>
<div class="e q" style="left:736px;top:443px"><i>Q</i><i>S</i></div>
<div class="e q" style="left:754px;top:443px"><i>Q</i><i>S</i></div>
<div class="e q" style="left:772px;top:443px"><i>Q</i><i>S</i></div>
<div class="e q" style="left:790px;top:443px"><i>Q</i><i>S</i></div>
<div class="e q" style="left:808px;top:443px"><i>Q</i><i>S</i></div>
<div class="e q" style="left:826px;top:443px"><i>Q</i><i>S</i></div>
<div class="e q" style="left:844px;top:443px"><i>Q</i><i>S</i></div>
<div class="e q" style="left:862px;top:443px"><i>Q</i><i>S</i></div>
<div class="e q" style="left:880px;top:443px"><i>Q</i><i>S</i></div>
<div class="e q" style="left:898px;top:443px"><i>Q</i><i>S</i></div>
<div class="e q" style="left:916px;top:443px"><i>Q</i><i>S</i></div>
<div class="e q" style="left:934px;top:443px"><i>Q</i><i>S</i></div>
<div class="e q" style="left:952px;top:443px"><i>Q</i><i>S</i></div>
<div class="e q" style="left:970px;top:443px"><i>Q</i><i>S</i></div>
<div class="e q" style="left:988px;top:443px"><i>Q</i><i>S</i></div>
<div class="e q" style="left:1006px;top:443px"><i>Q</i><i>S</i></div>
<div class="e q" style="left:1024px;top:443px"><i>Q</i><i>S</i></div>
<div class="e q" style="left:1042px;top:443px"><i>Q</i><i>S</i></div>
<div class="e q" style="left:1060px;top:443px"><i>Q</i><i>S</i></div>
<div class="e q" style="left:1078px;top:443px"><i>Q</i><i>S</i></div>
<div class="e q" style="left:1096px;top:443px"><i>Q</i><i>S</i></div>
<div class="e q" style="left:1114px;top:443px"><i>Q</i><i>S</i></div>
<div class="e q" style="left:1132px;top:443px"><i>Q</i><i>S</i></div>
<div class="e q" style="left:1150px;top:443px"><i>Q</i><i>S</i></div>
<div class="e q" style="left:1168px;top:443px"><i>Q</i><i>S</i></div>
<div class="e q" style="left:1186px;top:443px"><i>Q</i><i>S</i></div>
<div class="e q" style="left:1204px;top:443px"><i>Q</i><i>S</i></div>
<div class="e q" style="left:1222px;top:443px"><i>Q</i><i>S</i></div>
<div class="e q" style="left:1240px;top:443px"><i>Q</i><i>S</i></div>
<div class="e q" style="left:1258px;top:443px"><i>Q</i><i>S</i></div>
<div class="e q" style="left:1276px;top:443px"><i>Q</i><i>S</i></div>
<div class="e q" style="left:1294px;top:443px"><i>Q</i><i>S</i></div>
<div class="e q" style="left:1312px;top:443px"><i>Q</i><i>S</i></div>
<div class="e q" style="left:1330px;top:443px"><i>Q</i><i>S</i></div>
<div class="e q" style="left:1348px;top:443px"><i>Q</i><i>S</i></div>
<div class="e q" style="left:1366px;top:443px"><i>Q</i><i>S</i></div>
<div class="e q" style="left:1384px;top:443px"><i>Q</i><i>S</i></div>
<div class="e q" style="left:1402px;top:443px"><i>Q</i><i>S</i></div>
<div class="e q" style="left:1420px;top:443px"><i>Q</i><i>S</i></div>
<div class="e q" style="left:1438px;top:443px"><i>Q</i><i>S</i></div>
<div class="e q" style="left:1456px;top:443px"><i>Q</i><i>S</i></div>
<div class="e q" style="left:1474px;top:443px"><i>Q</i><i>S</i></div>
<div class="e q" style="left:1492px;top:443px"><i>Q</i><i>S</i></div>
<div class="e q" style="left:1510px;top:443px"><i>Q</i><i>S</i></div>
<div class="e q" style="left:1528px;top:443px"><i>Q</i><i>S</i></div>
<div class="e q" style="left:1546px;top:443px"><i>Q</i><i>S</i></div>
<div class="e p" style="left:1564px;top:443px"><i>I</i><i>S</i></div>
<div class="e q" style="left:1582px;top:479px"><i>Q</i><i>R</i></div>
<div class="e p" style="left:1600px;top:479px"><i>I</i><i>R</i></div>
<div class="e q" style="left:1618px;top:479px"><i>Q</i><i>R</i></div>
<div class="e q" style="left:1636px;top:479px"><i>Q</i><i>R</i></div>
<div class="e q" style="left:1654px;top:479px"><i>Q</i><i>R</i></div>
<div class="e q" style="left:1672px;top:479px"><i>Q</i><i>R</i></div>
<div class="e q" style="left:1690px;top:479px"><i>Q</i><i>R</i></div>
<div class="e q" style="left:1708px;top:479px"><i>Q</i><i>R</i></div>
<div class="e q" style="left:1726px;top:479px"><i>Q</i><i>R</i></div>
<div class="e q" style="left:1744px;top:479px"><i>Q</i><i>R</i></div>
<div class="e q" style="left:1762px;top:479px"><i>Q</i><i>R</i></div>
<div class="e q" style="left:1780px;top:479px"><i>Q</i><i>R</i></div>
<div class="e q" style="left:1798px;top:479px"><i>Q</i><i>R</i></div>
<div class="e q" style="left:1816px;top:479px"><i>Q</i><i>R</i></div>
<div class="e p" style="left:1834px;top:299px"><i>I</i><i>R</i></div>
<div class="e p" style="left:1852px;top:371px"><i>I</i><i>R</i></div>
<div class="e p" style="left:1870px;top:371px"><i>I</i><i>R</i></div>
<div class="e p" style="left:1888px;top:371px"><i>I</i><i>R</i></div>
<div class="e p" style="left:1906px;top:371px"><i>I</i><i>S</i></div>
<div class="e u" style="left:1924px;top:407px"><i>U</i><i>E</i></div>
<div class="e u" style="left:1942px;top:407px"><i>U</i><i>E</i></div>
<div class="e o" style="left:1960px;top:407px"><i>E</i><i>S</i></div>
<div class="e p" style="left:1978px;top:407px"><i>I</i><i>R</i></div>
<svg style="left:0;top:0" width="2022" height="1069"><path d="M406 297.3H1996" stroke="#000" stroke-width="1.7" fill="none"/><path d="M411.5 283.7V297M429.5 283.7V297M447.5 265.5V297M465.5 283.7V297M483.5 283.7V297M501.5 283.7V297M519.5 283.7V297M537.5 283.7V297M555.5 283.7V297M573.5 283.7V297M591.5 283.7V297M609.5 283.7V297M627.5 265.5V297M645.5 283.7V297M663.5 283.7V297M681.5 283.7V297M699.5 283.7V297M717.5 283.7V297M735.5 283.7V297M753.5 283.7V297M771.5 283.7V297M789.5 283.7V297M807.5 265.5V297M825.5 283.7V297M843.5 283.7V297M861.5 283.7V297M879.5 283.7V297M897.5 283.7V297M915.5 283.7V297M933.5 283.7V297M951.5 283.7V297M969.5 283.7V297M987.5 265.5V297M1005.5 283.7V297M1023.5 283.7V297M1041.5 283.7V297M1059.5 283.7V297M1077.5 283.7V297M1095.5 283.7V297M1113.5 283.7V297M1131.5 283.7V297M1149.5 283.7V297M1167.5 265.5V297M1185.5 283.7V297M1203.5 283.7V297M1221.5 283.7V297M1239.5 283.7V297M1257.5 283.7V297M1275.5 283.7V297M1293.5 283.7V297M1311.5 283.7V297M1329.5 283.7V297M1347.5 265.5V297M1365.5 283.7V297M1383.5 283.7V297M1401.5 283.7V297M1419.5 283.7V297M1437.5 283.7V297M1455.5 283.7V297M1473.5 283.7V297M1491.5 283.7V297M1509.5 283.7V297M1527.5 265.5V297M1545.5 283.7V297M1563.5 283.7V297M1581.5 283.7V297M1599.5 283.7V297M1617.5 283.7V297M1635.5 283.7V297M1653.5 283.7V297M1671.5 283.7V297M1689.5 283.7V297M1707.5 265.5V297M1725.5 283.7V297M1743.5 283.7V297M1761.5 283.7V297M1779.5 283.7V297M1797.5 283.7V297M1815.5 283.7V297M1833.5 283.7V297M1851.5 283.7V297M1869.5 283.7V297M1887.5 265.5V297M1905.5 283.7V297M1923.5 283.7V297M1941.5 283.7V297M1959.5 283.7V297M1977.5 283.7V297" stroke="#000" stroke-width="1.5" fill="none"/><path d="M406 477.8H610M1600 477.8H1978M406 513.8H1582M1834 513.8H1978M406 549.8H520M1870 549.8H1978M466 657.8H556M1888 657.8H1978M406 693.8H430M1834 405.8H1852M1852 441.8H1924" stroke="#10d410" stroke-width="1.8" fill="none"/><path d="M430.5 586V658M520.5 514V658M556.5 514V622M610.5 478V622M1582.5 478V479M1834.5 334V478M1852.5 334V371" stroke="#000" stroke-width="1.4" fill="none"/><path d="M1919.5 238.5H1931.5L1925.5 244.5Z" fill="#111"/></svg>
<div class="t" style="left:438.35px;top:242px;font-size:21.4px;line-height:24px;font-weight:700;letter-spacing:0.865px;-webkit-text-stroke:.7px #000;">370</div>
<div class="t" style="left:618.35px;top:242px;font-size:21.4px;line-height:24px;font-weight:700;letter-spacing:0.865px;-webkit-text-stroke:.7px #000;">380</div>
<div class="t" style="left:798.35px;top:242px;font-size:21.4px;line-height:24px;font-weight:700;letter-spacing:0.865px;-webkit-text-stroke:.7px #000;">390</div>
<div class="t" style="left:978.35px;top:242px;font-size:21.4px;line-height:24px;font-weight:700;letter-spacing:0.865px;-webkit-text-stroke:.7px #000;">400</div>
<div class="t" style="left:1158.35px;top:242px;font-size:21.4px;line-height:24px;font-weight:700;letter-spacing:0.865px;-webkit-text-stroke:.7px #000;">410</div>
<div class="t" style="left:1338.35px;top:242px;font-size:21.4px;line-height:24px;font-weight:700;letter-spacing:0.865px;-webkit-text-stroke:.7px #000;">420</div>
<div class="t" style="left:1518.35px;top:242px;font-size:21.4px;line-height:24px;font-weight:700;letter-spacing:0.865px;-webkit-text-stroke:.7px #000;">430</div>
<div class="t" style="left:1698.35px;top:242px;font-size:21.4px;line-height:24px;font-weight:700;letter-spacing:0.865px;-webkit-text-stroke:.7px #000;">440</div>
<div class="t" style="left:1878.35px;top:242px;font-size:21.4px;line-height:24px;font-weight:700;letter-spacing:0.865px;-webkit-text-stroke:.7px #000;">450</div>
<div class="b" style="left:1924px;top:244px;width:3px;height:787px;background:linear-gradient(90deg,rgba(255,40,40,.38),rgba(250,30,30,.62) 40%,rgba(250,30,30,.55) 70%,rgba(255,40,40,.3))"></div>
<div class="b" style="left:1325px;top:496px;width:467px;height:33px;border:1px solid #2f2f2f;background:linear-gradient(#e6f2f8 0,#c3d9e8 18%,#7fa5c5 40%,#6f9abf 46%,#88adca 62%,#b5cfe1 80%,#e3f0f6 100%)"></div>
<div class="b" style="left:1325px;top:529px;width:467px;height:319px;background:#eefafc;border:1px solid #a9c3dc;border-top:none"></div>
<div class="t" style="left:1332.40px;top:502px;font-size:17.6px;line-height:20px;font-weight:700;letter-spacing:-0.072px;">Event Details</div>
<svg style="left:1762px;top:499px" width="24" height="24"><path d="M4.2 4.8L19 19.6M19 4.8L4.2 19.6" stroke="#474747" stroke-width="5.8" fill="none"/><path d="M4.2 4.8L19 19.6M19 4.8L4.2 19.6" stroke="#d6d6d6" stroke-width="3.3" fill="none"/></svg>
<div class="t" style="left:1332.40px;top:537px;font-size:17.2px;line-height:20px;letter-spacing:-0.038px;">Event ID:</div>
<div class="t" style="left:1411.80px;top:537px;font-size:17.2px;line-height:20px;letter-spacing:0.234px;">452</div>
<div class="t" style="left:1332.40px;top:561px;font-size:17.2px;line-height:20px;letter-spacing:0.268px;">Context:</div>
<div class="t" style="left:1413.10px;top:561px;font-size:17.2px;line-height:20px;letter-spacing:0.237px;">thread 0 (Priority:1)</div>
<div class="t" style="left:1332.40px;top:585px;font-size:17.2px;line-height:20px;letter-spacing:0.088px;">Relative Time:</div>
<div class="t" style="left:1456.20px;top:585px;font-size:17.2px;line-height:20px;letter-spacing:0.634px;">0</div>
<div class="t" style="left:1332.40px;top:609px;font-size:17.2px;line-height:20px;letter-spacing:0.065px;">Raw Time Stamp:</div>
<div class="t" style="left:1482.20px;top:609px;font-size:17.2px;line-height:20px;letter-spacing:-0.354px;">0xCDCDCDCD</div>
<div class="t" style="left:1332.40px;top:633px;font-size:17.2px;line-height:20px;letter-spacing:-0.060px;">Event:</div>
<div class="t" style="left:1394.50px;top:633px;font-size:17.2px;line-height:20px;letter-spacing:-0.052px;">User Event (4096)</div>
<div class="t" style="left:1332.40px;top:657px;font-size:17.2px;line-height:20px;letter-spacing:0.441px;">Info 1:</div>
<div class="t" style="left:1397.00px;top:657px;font-size:17.2px;line-height:20px;letter-spacing:0.060px;">0x00000001</div>
<div class="t" style="left:1332.40px;top:681px;font-size:17.2px;line-height:20px;letter-spacing:0.441px;">Info 2:</div>
<div class="t" style="left:1397.00px;top:681px;font-size:17.2px;line-height:20px;letter-spacing:0.060px;">0x00000002</div>
<div class="t" style="left:1332.40px;top:705px;font-size:17.2px;line-height:20px;letter-spacing:0.441px;">Info 3:</div>
<div class="t" style="left:1397.00px;top:705px;font-size:17.2px;line-height:20px;letter-spacing:0.060px;">0x00000003</div>
<div class="t" style="left:1332.40px;top:728px;font-size:17.2px;line-height:20px;letter-spacing:0.441px;">Info 4:</div>
<div class="t" style="left:1397.00px;top:728px;font-size:17.2px;line-height:20px;letter-spacing:0.060px;">0x00000004</div>
<div class="t" style="left:1332.40px;top:752px;font-size:17.2px;line-height:20px;letter-spacing:0.369px;">Next Context:</div>
<div class="t" style="left:1459.50px;top:752px;font-size:17.2px;line-height:20px;letter-spacing:0.253px;">(thread 0) 0x001127A4</div>
<div class="t" style="left:1332.40px;top:776px;font-size:17.2px;line-height:20px;letter-spacing:0.131px;">Delta Previous:</div>
<div class="t" style="left:1464.50px;top:776px;font-size:17.2px;line-height:20px;letter-spacing:0.294px;">0 ticks</div>
<div class="t" style="left:1332.40px;top:800px;font-size:17.2px;line-height:20px;letter-spacing:0.302px;">Delta Next:</div>
<div class="t" style="left:1434.80px;top:800px;font-size:17.2px;line-height:20px;letter-spacing:0.236px;">0 ticks</div>
<div class="b" style="left:406px;top:1033px;width:1608px;height:26px;background:linear-gradient(#e6e6e6 0,#ececec 30%,#eeeeee 100%)"></div>
<div class="b" style="left:1684px;top:1035px;width:302px;height:22px;border:1px solid #8a8a8a;border-radius:3px;background:linear-gradient(#f0f0f0 0,#ebebeb 48%,#d2d2d4 56%,#c8c8cb 100%);box-shadow:inset 0 0 0 1px #fdfdfd,0 0 0 .5px rgba(120,120,120,.5)"></div>
<svg style="left:0;top:0" width="2022" height="1069"><path d="M421.6 1041.4V1051L415.2 1046.2Z" fill="#6a6a6a"/><path d="M1997 1040.9V1051L2003 1046Z" fill="#6a6a6a"/><path d="M1830.5 1041V1051M1834.5 1041V1051M1838.5 1041V1051" stroke="#222" stroke-width="1.6" fill="none"/><path d="M1831.7 1041V1051M1835.7 1041V1051M1839.7 1041V1051" stroke="#fff" stroke-width="0.9" fill="none"/></svg>
<div class="b" style="left:0px;top:0px;width:2022px;height:1px;background:#4a4a55"></div>
<div class="b" style="left:0px;top:0px;width:1px;height:1069px;background:#5e5e5e"></div>
<div class="b" style="left:1px;top:0px;width:1px;height:1069px;background:#a4a4a4"></div>
<div class="b" style="left:2021px;top:0px;width:1px;height:168px;background:#6a6a6a"></div>
<div class="b" style="left:2019px;top:169px;width:1px;height:898px;background:#e2e2e2"></div>
<div class="b" style="left:2020px;top:168px;width:1px;height:901px;background:#a8a8a8"></div>
<div class="b" style="left:2021px;top:168px;width:1px;height:901px;background:#6c6c6c"></div>
<div class="b" style="left:0px;top:1067px;width:2022px;height:1px;background:#c4c4c4"></div>
<div class="b" style="left:0px;top:1068px;width:2022px;height:1px;background:#7a7a7a"></div>
</body></html>
